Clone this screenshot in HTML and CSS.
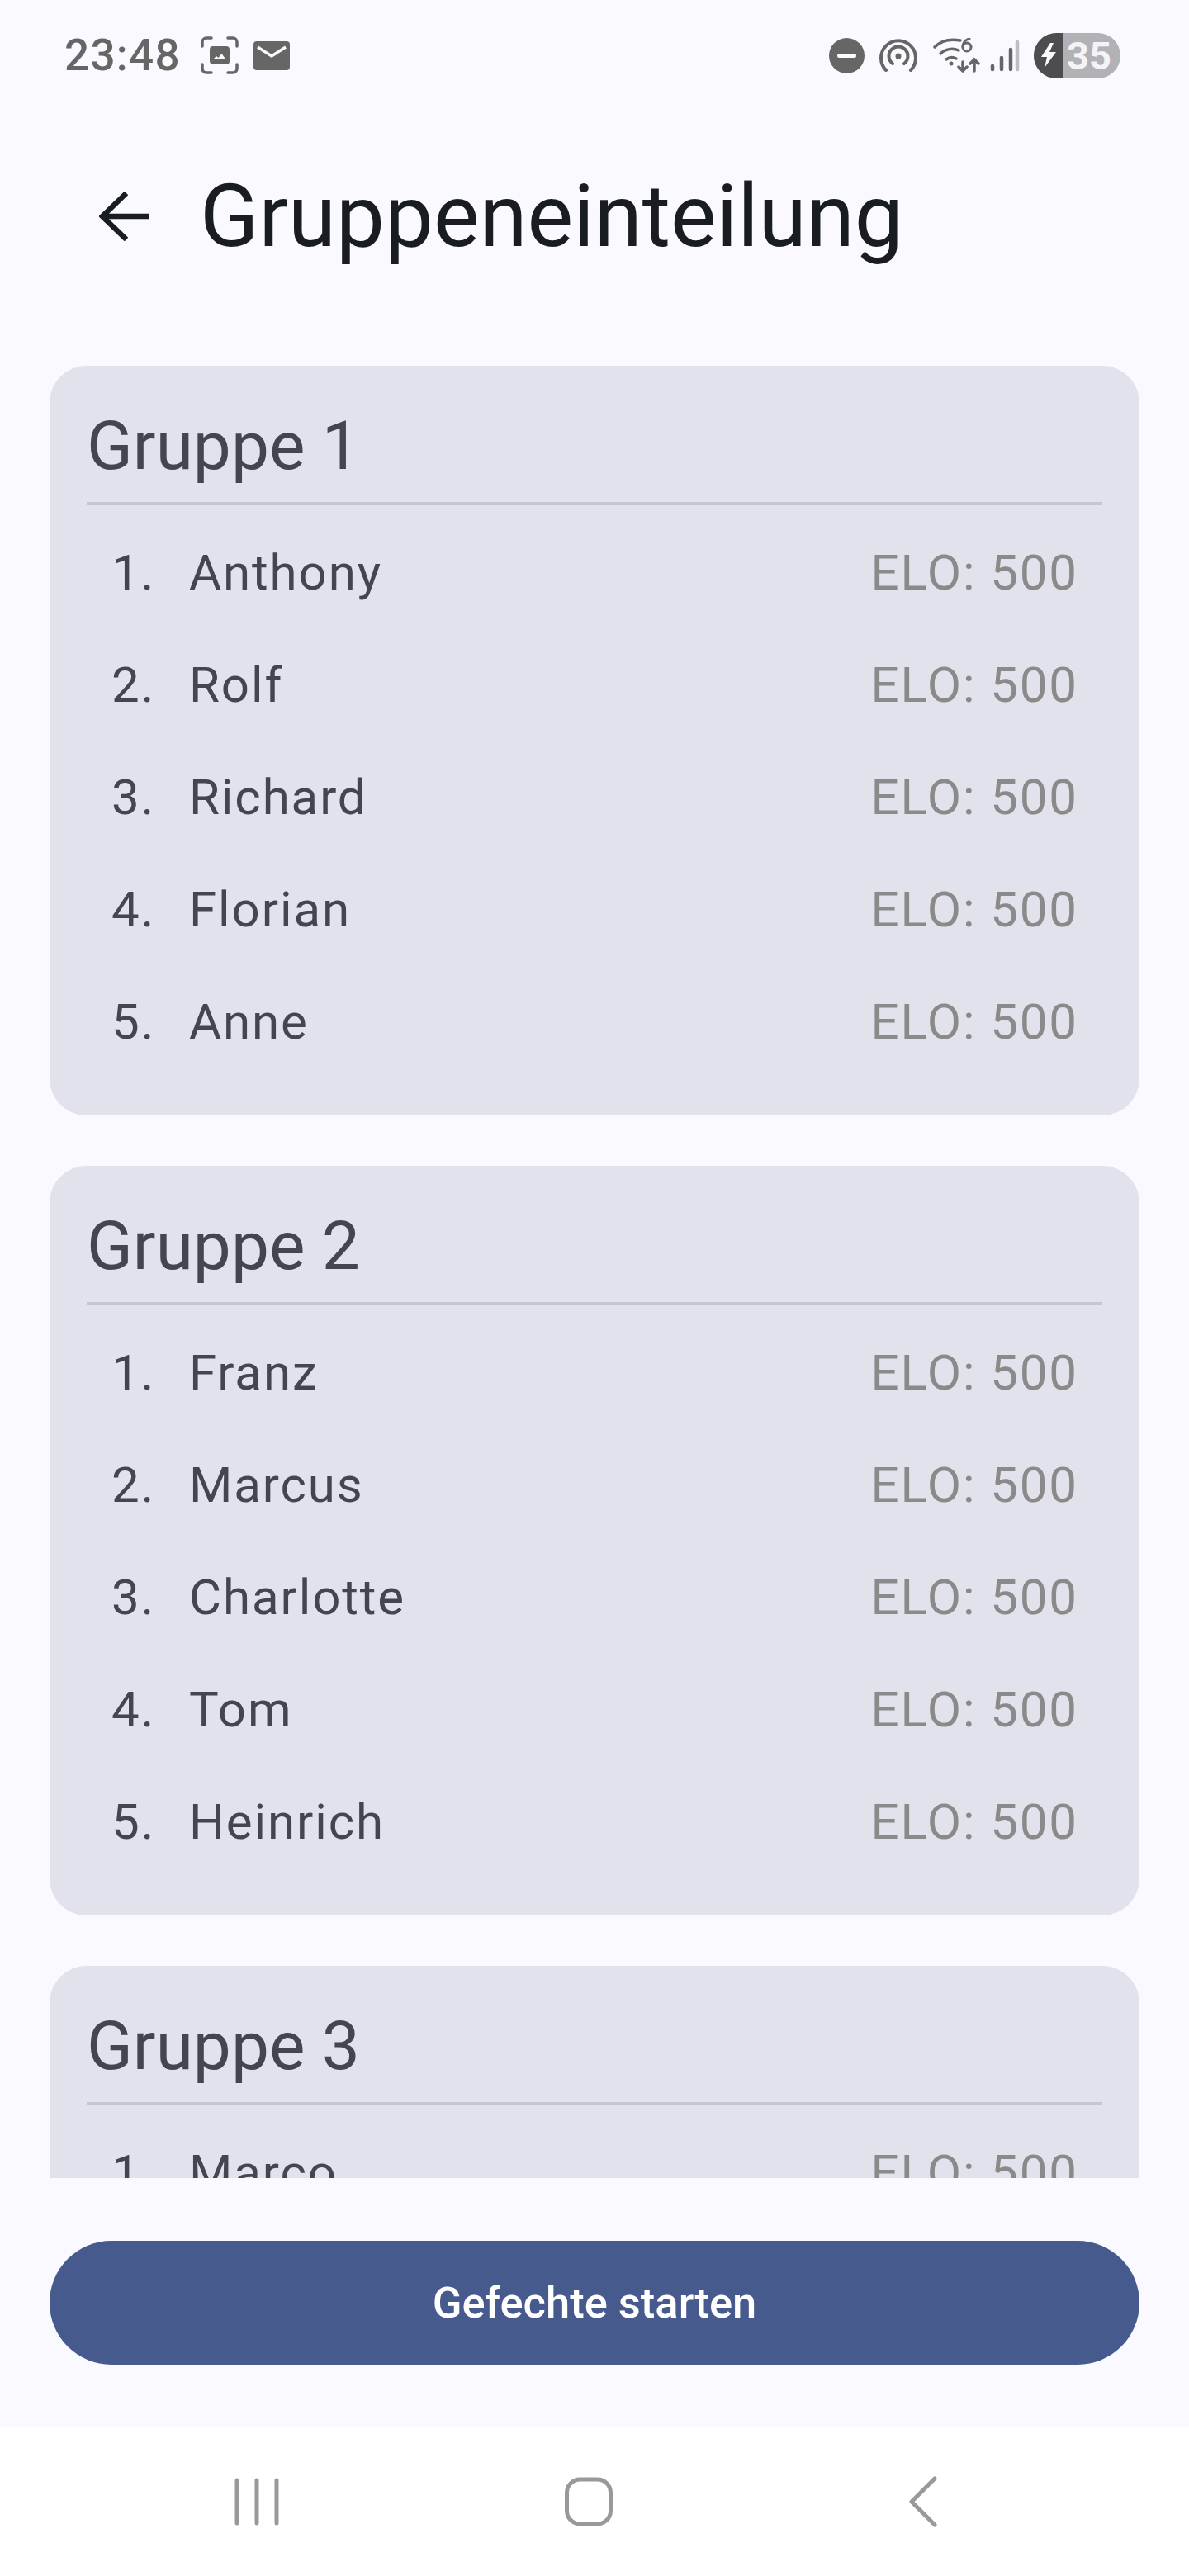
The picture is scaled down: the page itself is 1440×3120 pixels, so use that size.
FILE: index.html
```html
<!DOCTYPE html>
<html lang="de">
<head>
    <meta charset="UTF-8">
    <meta name="viewport" content="width=device-width, initial-scale=1.0">
    <title>Gruppeneinteilung</title>
    <link rel="stylesheet" href="styles.css">
</head>
<body>
    <!-- Status bar -->
    <div class="status-bar">
        <span class="clock">23:48</span>
        <svg class="icon-shot" viewBox="0 0 46 46" fill="none" stroke="#666" stroke-width="3.5" stroke-linecap="round">
            <path d="M2 12V7a5 5 0 0 1 5-5h6M33 2h6a5 5 0 0 1 5 5v5M44 34v5a5 5 0 0 1-5 5h-6M13 44H7a5 5 0 0 1-5-5v-5"/>
            <rect x="11" y="12" width="24" height="22" rx="4" fill="#666" stroke="none"/>
            <path d="M15 28l4-4 2.500 2 4-5 5 7z" fill="#fafaff" stroke="none"/>
        </svg>
        <svg class="icon-mail" viewBox="0 0 44 35">
            <rect width="44" height="35" rx="4" fill="#666"/>
            <path d="M5 7l17 11L39 7" fill="none" stroke="#fafaff" stroke-width="3.500"/>
        </svg>
        <div class="status-right">
            <svg class="icon-dnd" viewBox="0 0 43 43">
                <circle cx="21.500" cy="21.500" r="21.500" fill="#666"/>
                <rect x="10" y="19" width="23" height="5" rx="2.500" fill="#fafaff"/>
            </svg>
            <svg class="icon-hotspot" viewBox="0 0 46 40" fill="none" stroke="#666" stroke-width="4" stroke-linecap="round">
                <path d="M8 38a21 21 0 1 1 30 0"/>
                <path d="M16 30a11.500 11.500 0 1 1 14 0"/>
                <circle cx="23" cy="21" r="3.500" fill="#666" stroke="none"/>
            </svg>
            <svg class="icon-wifi" viewBox="0 0 57 42" fill="none" stroke="#666" stroke-width="3.500" stroke-linecap="round">
                <path d="M2 11C10 3 22 1 33 3"/>
                <path d="M9 19c6-6 15-7 22-4"/>
                <path d="M16 26c4-3 8-3 12-1"/>
                <circle cx="22" cy="31" r="2.500" fill="#666" stroke="none"/>
                <circle cx="41" cy="11" r="5" stroke-width="3"/>
                <path d="M36 11c0-5 3-9 8-10" stroke-width="3"/>
                <path d="M36 29v11M31 35l5 5 5-5M50 40V26M45 31l5-5 5 5"/>
            </svg>
            <svg class="icon-signal" viewBox="0 0 36 39" stroke-width="4.500" stroke-linecap="round" fill="none">
                <path d="M3 32v4M14 22v14M25 12v24" stroke="#666"/>
                <path d="M33 3v33" stroke="#bdbdc2"/>
            </svg>
            <div class="battery">
                <div class="battery-bolt">
                    <svg viewBox="0 0 20 30" width="20" height="30"><path d="M12 0L1 17h7L5 30l14-19h-8l5-11z" fill="#fafaff"/></svg>
                </div>
                <span class="battery-level">35</span>
            </div>
        </div>
    </div>

    <!-- Top bar -->
    <div class="top-bar">
        <svg class="icon-back" viewBox="0 0 60 60" fill="none" stroke="#191c20" stroke-width="6.500">
            <path d="M60 30H4M33 2L4 30l29 28"/>
        </svg>
        <h1>Gruppeneinteilung</h1>
    </div>

    <!-- Group list -->
    <div class="group-list">
        <section class="group-card">
            <h2>Gruppe 1</h2>
            <div class="player"><span class="rank">1.</span><span class="name">Anthony</span><span class="elo">ELO: 500</span></div>
            <div class="player"><span class="rank">2.</span><span class="name">Rolf</span><span class="elo">ELO: 500</span></div>
            <div class="player"><span class="rank">3.</span><span class="name">Richard</span><span class="elo">ELO: 500</span></div>
            <div class="player"><span class="rank">4.</span><span class="name">Florian</span><span class="elo">ELO: 500</span></div>
            <div class="player"><span class="rank">5.</span><span class="name">Anne</span><span class="elo">ELO: 500</span></div>
        </section>
        <section class="group-card">
            <h2>Gruppe 2</h2>
            <div class="player"><span class="rank">1.</span><span class="name">Franz</span><span class="elo">ELO: 500</span></div>
            <div class="player"><span class="rank">2.</span><span class="name">Marcus</span><span class="elo">ELO: 500</span></div>
            <div class="player"><span class="rank">3.</span><span class="name">Charlotte</span><span class="elo">ELO: 500</span></div>
            <div class="player"><span class="rank">4.</span><span class="name">Tom</span><span class="elo">ELO: 500</span></div>
            <div class="player"><span class="rank">5.</span><span class="name">Heinrich</span><span class="elo">ELO: 500</span></div>
        </section>
        <section class="group-card">
            <h2>Gruppe 3</h2>
            <div class="player"><span class="rank">1.</span><span class="name">Marco</span><span class="elo">ELO: 500</span></div>
        </section>
    </div>

    <!-- Start button -->
    <div class="footer">
        <button class="start-button" type="button">Gefechte starten</button>
    </div>

    <!-- Navigation bar -->
    <div class="nav-bar">
        <svg class="nav-recent" viewBox="0 0 54 58" fill="none" stroke="#999" stroke-width="5" stroke-linecap="round">
            <path d="M3 3v52M27 3v52M51 3v52"/>
        </svg>
        <svg class="nav-home" viewBox="0 0 58 60" fill="none" stroke="#999" stroke-width="5">
            <rect x="2.500" y="3" width="53" height="54" rx="16"/>
        </svg>
        <svg class="nav-back" viewBox="0 0 36 62" fill="none" stroke="#999" stroke-width="5" stroke-linecap="round" stroke-linejoin="round">
            <path d="M32 3L4 31l28 28"/>
        </svg>
    </div>
</body>
</html>
```

FILE: styles.css
```css
/* Global styles */
html, body {
    margin: 0;
    padding: 0;
}
body {
    display: flex;
    flex-direction: column;
    height: 3120px;
    overflow: hidden;
    background: #f9f9ff;
    font-family: 'Roboto', sans-serif;
    color: #44464f;
}

/* Status bar */
.status-bar {
    display: flex;
    align-items: center;
    height: 134px;
    padding: 0 83px 0 78px;
    box-sizing: border-box;
}
.clock {
    font-family: 'Roboto', sans-serif;
    font-size: 53px;
    font-weight: 500;
    letter-spacing: 1.3px;
    color: #666;
    margin-right: 24px;
}
.icon-shot {
    width: 46px;
    height: 46px;
    margin-right: 18px;
}
.icon-mail {
    width: 44px;
    height: 35px;
}
.status-right {
    display: flex;
    align-items: center;
    margin-left: auto;
}
.icon-dnd {
    width: 43px;
    height: 43px;
    margin-right: 18px;
}
.icon-hotspot {
    width: 46px;
    height: 40px;
    margin-right: 19px;
}
.icon-wifi {
    width: 57px;
    height: 42px;
    margin-right: 12px;
}
.icon-signal {
    width: 36px;
    height: 39px;
    margin-right: 17px;
}
.battery {
    display: flex;
    width: 105px;
    height: 55px;
    border-radius: 28px;
    overflow: hidden;
    background: #b2b2b6;
}
.battery-bolt {
    display: flex;
    align-items: center;
    justify-content: center;
    width: 35px;
    background: #4d4d4f;
}
.battery-level {
    padding-left: 5px;
    font-size: 47px;
    line-height: 55px;
    font-weight: 700;
    color: #f4f4f8;
}

/* Top bar */
.top-bar {
    display: flex;
    align-items: center;
    height: 260px;
    padding: 0 0 4px 120px;
    box-sizing: border-box;
}
.icon-back {
    width: 60px;
    height: 60px;
    margin-right: 62px;
}
h1 {
    margin: 0;
    font-size: 105px;
    font-weight: 400;
    color: #191c20;
}

/* Group cards */
.group-list {
    flex: 1;
    min-height: 0;
    overflow: hidden;
    padding: 49px 60px 0;
}
.group-card {
    padding: 45px 45px 46px;
    margin-bottom: 61px;
    background: #e1e2ec;
    border-radius: 45px;
}
h2 {
    margin: 0 0 13px;
    padding-bottom: 16px;
    border-bottom: 4px solid #c4c6d0;
    font-size: 82px;
    line-height: 104px;
    font-weight: 400;
    color: #44464f;
}
.player {
    display: flex;
    align-items: center;
    height: 136px;
    padding: 0 29px 0 30px;
    font-size: 60px;
    letter-spacing: 1.9px;
}
.rank {
    width: 94px;
}
.name {
    flex: 1;
}
.elo {
    color: #8a8a8a;
}

/* Start button */
.footer {
    padding: 76px 60px;
}
.start-button {
    display: block;
    width: 100%;
    height: 150px;
    border: none;
    border-radius: 75px;
    background: #465a8d;
    color: #fff;
    font-family: 'Roboto', sans-serif;
    font-size: 52.5px;
    font-weight: 500;
}

/* Navigation bar */
.nav-bar {
    display: flex;
    align-items: center;
    height: 180px;
    background: #fff;
}
.nav-recent {
    width: 54px;
    height: 58px;
    margin-left: 284px;
    margin-right: 346px;
}
.nav-home {
    width: 58px;
    height: 60px;
    margin-right: 358px;
}
.nav-back {
    width: 36px;
    height: 62px;
}
```
